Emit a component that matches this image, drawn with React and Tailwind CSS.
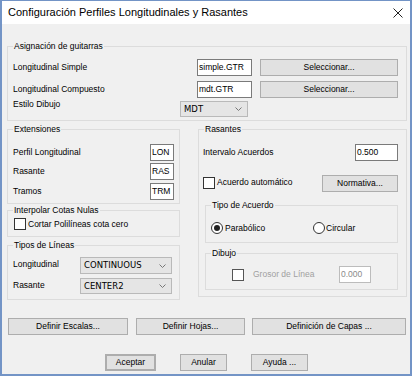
import React from "react";

const Box = ({ title, className = "", children }) => (
  <fieldset className={`border border-[#dcdcdc] ${className}`}>
    <legend className="ml-[5px] px-[1px] leading-[11px]">{title}</legend>
    {children}
  </fieldset>
);

const Input = ({ value, className = "", disabled = false }) => (
  <div
    className={`h-[17px] bg-white border flex items-center px-[1px] leading-none ${
      disabled ? "border-[#bcbcbc] text-[#8a8a8a]" : "border-[#7a7a7a]"
    } ${className}`}
  >
    {value}
  </div>
);

const Button = ({ label, className = "" }) => (
  <div
    className={`h-[17px] bg-[#e1e1e1] border border-[#adadad] flex items-center justify-center leading-none ${className}`}
  >
    {label}
  </div>
);

const Select = ({ value, className = "" }) => (
  <div
    className={`bg-[#e5e5e5] border border-[#b9b9b9] flex items-center justify-between pl-[3px] pr-[5px] font-['DejaVu_Sans'] text-[8.5px] leading-none ${className}`}
  >
    <span>{value}</span>
    <svg width="7" height="4" viewBox="0 0 7 4">
      <polyline points="0.5,0.5 3.5,3.5 6.5,0.5" fill="none" stroke="#777" strokeWidth="1" />
    </svg>
  </div>
);

const Check = ({ disabled = false }) => (
  <div className={`w-[12px] h-[12px] bg-white border ${disabled ? "border-[#555]" : "border-[#333]"}`} />
);

const Radio = ({ checked = false }) => (
  <div className="w-[12px] h-[12px] rounded-full bg-white border border-[#333] flex items-center justify-center">
    {checked && <div className="w-[6px] h-[6px] rounded-full bg-[#222]" />}
  </div>
);

export default function App() {
  return (
    <div className="w-[412px] h-[376px] flex flex-col border-x-2 border-b-2 border-t border-[#7394c6] font-['Liberation_Sans',sans-serif] text-[8.5px] text-black">
      <div className="h-[23px] bg-white flex items-center justify-between pl-[6px] pr-[7px] shrink-0">
        <span className="text-[11px]">Configuración Perfiles Longitudinales y Rasantes</span>
        <svg width="10" height="10" viewBox="0 0 10 10">
          <path d="M0.5 0.5 L9.5 9.5 M9.5 0.5 L0.5 9.5" stroke="#222" strokeWidth="1" />
        </svg>
      </div>

      <div className="flex-1 bg-[#f0f0f0] pl-[5px]">
        <Box title="Asignación de guitarras" className="mt-[17px] w-[400px] h-[80px]">
          <div className="mt-[7px] h-[17px] flex items-center">
            <span className="w-[189px] pl-[5px]">Longitudinal Simple</span>
            <Input value="simple.GTR" className="w-[55px]" />
            <Button label="Seleccionar..." className="ml-[8px] w-[138px]" />
          </div>
          <div className="mt-[5px] h-[17px] flex items-center">
            <span className="w-[189px] pl-[5px]">Longitudinal Compuesto</span>
            <Input value="mdt.GTR" className="w-[55px]" />
            <Button label="Seleccionar..." className="ml-[8px] w-[138px] h-[16px] -mt-[1px]" />
          </div>
          <div className="mt-[3px] h-[16px] flex items-start">
            <span className="w-[172px] pl-[5px] -mt-[3px]">Estilo Dibujo</span>
            <Select value="MDT" className="w-[68px] h-[16px]" />
          </div>
        </Box>

        <div className="flex items-start gap-[18px]">
          <div className="w-[173px] shrink-0">
            <Box title="Extensiones" className="mt-[3px] h-[80px]">
              <div className="mt-[9px] h-[16px] flex items-center justify-between pl-[5px] pr-[5px]">
                <span>Perfil Longitudinal</span>
                <Input value="LON" className="w-[24px] h-[16px]" />
              </div>
              <div className="mt-[3px] h-[16px] flex items-center justify-between pl-[5px] pr-[5px]">
                <span>Rasante</span>
                <Input value="RAS" className="w-[24px] h-[16px]" />
              </div>
              <div className="mt-[4px] h-[16px] flex items-center justify-between pl-[5px] pr-[5px]">
                <span>Tramos</span>
                <Input value="TRM" className="w-[24px] h-[16px]" />
              </div>
            </Box>

            <Box title="Interpolar Cotas Nulas" className="mt-[1px] h-[32px]">
              <div className="mt-[2px] flex items-center gap-[2px] pl-[6px]">
                <Check />
                <span>Cortar Polilíneas cota cero</span>
              </div>
            </Box>

            <Box title="Tipos de Líneas" className="mt-[3px] h-[60px]">
              <div className="mt-[6px] h-[17px] flex items-center">
                <span className="w-[72px] pl-[5px] -mt-[2px]">Longitudinal</span>
                <Select value="CONTINUOUS" className="w-[92px] h-[17px]" />
              </div>
              <div className="mt-[4px] h-[16px] flex items-center">
                <span className="w-[72px] pl-[5px] -mt-[2px]">Rasante</span>
                <Select value="CENTER2" className="w-[92px] h-[16px]" />
              </div>
            </Box>
          </div>

          <Box title="Rasantes" className="mt-[3px] w-[209px] h-[173px]">
            <div className="mt-[9px] h-[16px] flex items-center justify-between pl-[4px] pr-[8px]">
              <span>Intervalo Acuerdos</span>
              <Input value="0.500" className="w-[43px] h-[16px]" />
            </div>
            <div className="mt-[15px] h-[17px] flex items-center justify-between pl-[4px] pr-[8px]">
              <div className="flex items-center gap-[2px] -mt-[2px]">
                <Check />
                <span>Acuerdo automático</span>
              </div>
              <Button label="Normativa..." className="w-[76px]" />
            </div>

            <Box title="Tipo de Acuerdo" className="mt-[8px] ml-[6px] w-[193px] h-[43px]">
              <div className="mt-[11px] flex items-center pl-[5px]">
                <div className="w-[102px] flex items-center gap-[2px]">
                  <Radio checked />
                  <span>Parabólico</span>
                </div>
                <div className="flex items-center gap-[1px]">
                  <Radio />
                  <span>Circular</span>
                </div>
              </div>
            </Box>

            <Box title="Dibujo" className="mt-[5px] ml-[6px] w-[193px] h-[42px]">
              <div className="mt-[7px] h-[17px] flex items-center pl-[26px]">
                <Check disabled />
                <span className="ml-[9px] w-[86px] text-[#a0a0a0]">Grosor de Línea</span>
                <Input value="0.000" disabled className="w-[32px]" />
              </div>
            </Box>
          </Box>
        </div>

        <div className="mt-[18px] flex items-center">
          <Button label="Definir Escalas..." className="ml-[1px] w-[120px]" />
          <Button label="Definir Hojas..." className="ml-[8px] w-[109px]" />
          <Button label="Definición de Capas ..." className="ml-[7px] w-[154px]" />
        </div>

        <div className="mt-[19px] flex items-center">
          <Button label="Aceptar" className="ml-[98px] w-[51px] border-[#0078d7] border-2" />
          <Button label="Anular" className="ml-[24px] w-[47px]" />
          <Button label="Ayuda ..." className="ml-[24px] w-[57px]" />
        </div>
      </div>
    </div>
  );
}
